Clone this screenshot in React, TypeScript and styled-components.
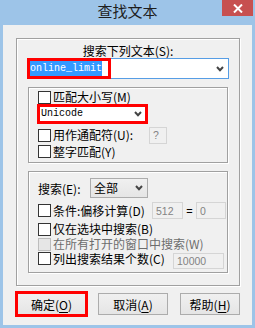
import React from "react";
import styled, { createGlobalStyle } from "styled-components";

const GlobalStyle = createGlobalStyle`
  html, body {
    margin: 0;
    padding: 0;
    background: #9dc4e8;
  }
  body {
    font-family: "Noto Sans CJK SC", "Noto Sans", sans-serif;
    font-size: 12px;
    color: #000;
  }
`;

const Chevron = () => (
  <svg width="8" height="6" viewBox="0 0 8 6">
    <path d="M1 1 L4 4.2 L7 1" stroke="#444" strokeWidth="2" fill="none" />
  </svg>
);

const App = () => {
  return (
    <Window>
      <GlobalStyle />
      <TitleBar>
        <Title>查找文本</Title>
        <CloseButton>
          <svg width="10" height="9" viewBox="0 0 10 9">
            <path d="M1 0.5 L9 8.5 M9 0.5 L1 8.5" stroke="#fff" strokeWidth="2" />
          </svg>
        </CloseButton>
      </TitleBar>
      <Client>
        <OuterGroup>
          <Caption>搜索下列文本(S):</Caption>
          <Combo $w={202} $h={21} $variant="focus">
            <Selected>online_limit</Selected>
            <Chevron />
            <Mark />
          </Combo>

          <Group $h={76} $pad="2px 0 3px 9px">
            <Row $h={14}>
              <Box />
              <Label>匹配大小写(M)</Label>
            </Row>
            <Combo $w={111} $h={20} $variant="mark">
              <Mono>Unicode</Mono>
              <Chevron />
            </Combo>
            <Row $h={18} $mt={2}>
              <Box />
              <Label $w={96}>用作通配符(U):</Label>
              <Field $w={18} $h={17}>?</Field>
            </Row>
            <Row $h={15}>
              <Box />
              <Label>整字匹配(Y)</Label>
            </Row>
          </Group>

          <Group $h={102} $pad="6px 0 3px 9px">
            <Row $h={20}>
              <PlainLabel>搜索(E):</PlainLabel>
              <Combo $w={58} $h={20} $variant="list">
                <span>全部</span>
                <Chevron />
              </Combo>
            </Row>
            <Row $h={17} $mt={4}>
              <Box />
              <Label $w={99}>条件:偏移计算(D)</Label>
              <Field $w={31} $h={17}>512</Field>
              <Equals>=</Equals>
              <Field $w={30} $h={17}>0</Field>
            </Row>
            <Row $h={14} $mt={3}>
              <Box />
              <Label>仅在选块中搜索(B)</Label>
            </Row>
            <Row $h={14} $mt={1}>
              <Box $disabled />
              <Label $disabled>在所有打开的窗口中搜索(W)</Label>
            </Row>
            <Row $h={17} $mt={1} $top>
              <Box />
              <Label $w={120}>列出搜索结果个数(C)</Label>
              <Field $w={51} $h={16} $mt={1}>10000</Field>
            </Row>
          </Group>
        </OuterGroup>

        <ButtonRow>
          <Button $w={69} $marked>
            确定(<u>O</u>)
          </Button>
          <Button $w={70}>
            取消(<u>A</u>)
          </Button>
          <Button $w={60}>
            帮助(<u>H</u>)
          </Button>
        </ButtonRow>
      </Client>
    </Window>
  );
};

export default App;

const Window = styled.div`
  width: 255px;
  height: 328px;
  background: #9dc4e8;
  display: flex;
  flex-direction: column;
  align-items: center;
`;

const TitleBar = styled.div`
  width: 100%;
  height: 25px;
  display: grid;
  grid-template-columns: 1fr auto 1fr;
  align-items: start;
`;

const Title = styled.div`
  grid-column: 2;
  font-size: 15px;
  line-height: 20px;
  padding-top: 1px;
  color: #1e1e1e;
`;

const CloseButton = styled.div`
  grid-column: 3;
  justify-self: end;
  margin-right: 2px;
  width: 31px;
  height: 16px;
  background: #c75050;
  display: flex;
  align-items: center;
  justify-content: center;
`;

const Client = styled.div`
  width: 249px;
  height: 300px;
  box-sizing: border-box;
  background: #f0f0f0;
  padding: 13px 0 0 13px;
`;

const OuterGroup = styled.div`
  width: 224px;
  height: 248px;
  box-sizing: border-box;
  border: 1px solid #a0a0a0;
  box-shadow: inset 1px 1px 0 #fff, 1px 1px 0 #fff;
  padding: 4px 10px 12px;
`;

const Caption = styled.div`
  height: 15px;
  line-height: 15px;
  text-align: center;
  white-space: nowrap;
`;

const Combo = styled.div<{
  $w: number;
  $h: number;
  $variant: "focus" | "mark" | "list";
}>`
  position: relative;
  display: flex;
  align-items: center;
  justify-content: space-between;
  box-sizing: border-box;
  width: ${(p) => p.$w}px;
  height: ${(p) => p.$h}px;
  flex: none;
  border: ${(p) =>
    p.$variant === "focus"
      ? "1px solid #569de5"
      : p.$variant === "mark"
      ? "3px solid #ff0000"
      : "1px solid #acacac"};
  background: ${(p) =>
    p.$variant === "list" ? "linear-gradient(#f0f0f0, #e5e5e5)" : "#fff"};
  padding: ${(p) =>
    p.$variant === "focus"
      ? "0 4px 0 2px"
      : p.$variant === "mark"
      ? "0 3px 0 1px"
      : "0 4px 0 3px"};
  margin-left: ${(p) => (p.$variant === "mark" ? "-1px" : "0")};
  line-height: 16px;
`;

const Selected = styled.span`
  font-family: "Liberation Mono", monospace;
  font-size: 10px;
  line-height: 15px;
  background: #3399ff;
  color: #fff;
`;

const Mono = styled.span`
  font-family: "Liberation Mono", monospace;
  font-size: 10px;
`;

const Mark = styled.span`
  position: absolute;
  left: -1px;
  top: -1px;
  width: 84px;
  height: 21px;
  box-sizing: border-box;
  border: 3px solid #ff0000;
`;

const Group = styled.div<{ $h: number; $pad: string }>`
  margin: 8px 1px 0;
  height: ${(p) => p.$h}px;
  box-sizing: border-box;
  border: 1px solid #a0a0a0;
  box-shadow: inset 1px 1px 0 #fff, 1px 1px 0 #fff;
  padding: ${(p) => p.$pad};
`;

const Row = styled.div<{ $h: number; $mt?: number; $top?: boolean }>`
  display: flex;
  align-items: ${(p) => (p.$top ? "flex-start" : "center")};
  height: ${(p) => p.$h}px;
  margin-top: ${(p) => p.$mt ?? 0}px;
`;

const Box = styled.span<{ $disabled?: boolean }>`
  flex: none;
  width: 13px;
  height: 13px;
  box-sizing: border-box;
  border: 1px solid ${(p) => (p.$disabled ? "#bcbcbc" : "#333")};
  background: ${(p) => (p.$disabled ? "#e6e6e6" : "#fff")};
`;

const Label = styled.span<{ $w?: number; $disabled?: boolean }>`
  flex: none;
  margin-left: 2px;
  width: ${(p) => (p.$w ? `${p.$w}px` : "auto")};
  white-space: nowrap;
  line-height: 14px;
  color: ${(p) => (p.$disabled ? "#6d6d6d" : "#000")};
`;

const PlainLabel = styled.span`
  width: 52px;
  flex: none;
  white-space: nowrap;
`;

const Field = styled.span<{ $w: number; $h: number; $mt?: number }>`
  flex: none;
  display: flex;
  align-items: center;
  box-sizing: border-box;
  width: ${(p) => p.$w}px;
  height: ${(p) => p.$h}px;
  margin-top: ${(p) => p.$mt ?? 0}px;
  border: 1px solid #d5d5d5;
  background: #f0f0f0;
  color: #838383;
  font-family: "Liberation Sans", sans-serif;
  font-size: 10.5px;
  padding-left: 3px;
`;

const Equals = styled.span`
  flex: none;
  width: 13px;
  text-align: center;
  font-family: "Liberation Sans", sans-serif;
  font-size: 11px;
`;

const ButtonRow = styled.div`
  display: flex;
  gap: 12px;
  margin-top: 7px;
  padding-left: 1px;
`;

const Button = styled.div<{ $w: number; $marked?: boolean }>`
  display: flex;
  align-items: center;
  justify-content: center;
  box-sizing: border-box;
  width: ${(p) => p.$w}px;
  height: 22px;
  border: 1px solid #acacac;
  background: linear-gradient(#f0f0f0, #e5e5e5);
  outline: ${(p) => (p.$marked ? "3px solid #ff0000" : "none")};
  outline-offset: -1px;
  white-space: nowrap;

  u {
    text-decoration-thickness: 1px;
    text-underline-offset: 2px;
  }
`;
